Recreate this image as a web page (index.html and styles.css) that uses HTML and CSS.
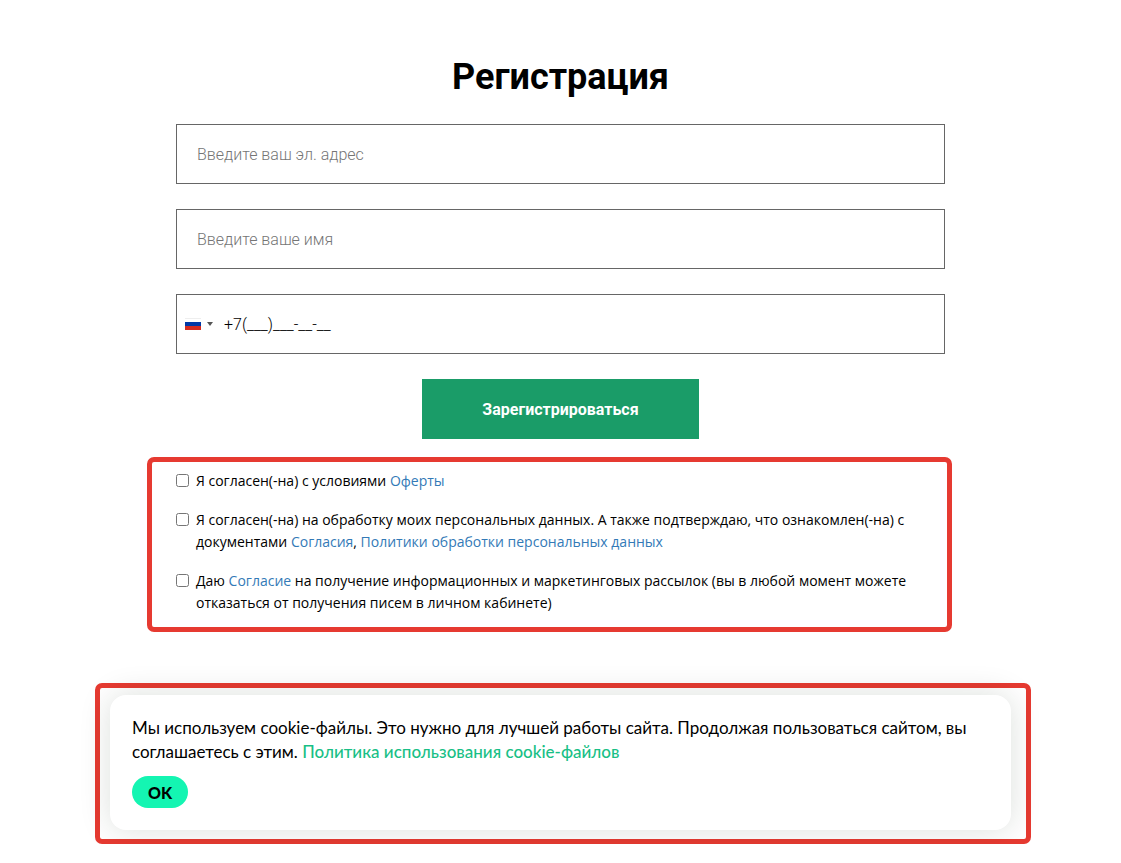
FILE: index.html
```html
<!DOCTYPE html>
<html lang="ru">

<head>
    <meta charset="UTF-8">
    <meta name="viewport" content="width=device-width, initial-scale=1.0">
    <title>Регистрация</title>
    <link rel="stylesheet" href="styles.css">
</head>

<body>
    <main class="container">
        <h1 class="title">Регистрация</h1>
        <form class="form">
            <input type="email" class="field" name="email" placeholder="Введите ваш эл. адрес" aria-label="Введите ваш эл. адрес">
            <input type="text" class="field" name="name" placeholder="Введите ваше имя" aria-label="Введите ваше имя">
            <div class="field phone">
                <button type="button" class="country" aria-label="Россия">
                    <svg class="flag" width="16" height="12" viewBox="0 0 16 12">
                        <rect width="16" height="12" fill="#fff" />
                        <rect y="4" width="16" height="4" fill="#0039a6" />
                        <rect y="8" width="16" height="4" fill="#d52b1e" />
                        <path d="M0 .5h16" stroke="#eee" />
                    </svg>
                    <svg width="6" height="4" viewBox="0 0 6 4">
                        <path d="M0 0h6L3 4z" fill="#555" />
                    </svg>
                </button>
                <input type="tel" class="phone_input" name="phone" value="+7(___)___-__-__" aria-label="Телефон">
            </div>
            <button type="submit" class="submit">Зарегистрироваться</button>

            <div class="frame agreements">
                <div class="agreement">
                    <input type="checkbox" id="offer">
                    <label for="offer">Я согласен(-на) с условиями <a href="#">Оферты</a></label>
                </div>
                <div class="agreement">
                    <input type="checkbox" id="personal">
                    <label for="personal">Я согласен(-на) на обработку моих персональных данных. А также подтверждаю, что ознакомлен(-на) с документами <a href="#">Согласия</a>, <a href="#">Политики обработки персональных данных</a></label>
                </div>
                <div class="agreement">
                    <input type="checkbox" id="mailing">
                    <label for="mailing">Даю <a href="#">Согласие</a> на получение информационных и маркетинговых рассылок (вы в любой момент можете отказаться от получения писем в личном кабинете)</label>
                </div>
            </div>
        </form>
    </main>

    <div class="cookie_wrap">
        <div class="frame cookie_frame">
            <div class="cookie">
                <p class="cookie_text">Мы используем cookie-файлы. Это нужно для лучшей работы сайта. Продолжая пользоваться сайтом, вы соглашаетесь с этим. <a href="#">Политика использования cookie-файлов</a></p>
                <button type="button" class="cookie_ok">OK</button>
            </div>
        </div>
    </div>
</body>

</html>
```
FILE: styles.css
```css
* {
    box-sizing: border-box;
}

body {
    margin: 0;
    background-color: #fff;
    color: #000;
    font-family: Roboto, sans-serif;
}

a {
    text-decoration: none;
}

.container {
    max-width: 769px;
    margin: 0 auto;
    padding-top: 52px;
}

.title {
    margin: 0 0 22px;
    font-size: 36px;
    font-weight: 700;
    line-height: 50px;
    text-align: center;
}

.form {
    display: flex;
    flex-direction: column;
}

.field {
    width: 100%;
    height: 60px;
    margin: 0 0 25px;
    padding: 0 20px;
    border: 1px solid #666;
    border-radius: 0;
    background-color: #fff;
    color: #000;
    font-family: Roboto, sans-serif;
    font-size: 16px;
    font-weight: 300;
}

.field::placeholder {
    color: #757575;
}

.phone {
    display: flex;
    align-items: center;
    padding: 0 8px;
}

.country {
    display: flex;
    align-items: center;
    gap: 6px;
    margin: 0;
    padding: 0;
    border: 0;
    background: none;
}

.phone_input {
    flex: 1;
    min-width: 0;
    padding: 0 0 0 11px;
    border: 0;
    color: #000;
    font: inherit;
}

.submit {
    align-self: center;
    height: 60px;
    padding: 0 60px;
    border: 0;
    background-color: #1a9c68;
    color: #fff;
    font-family: Roboto, sans-serif;
    font-size: 16px;
    font-weight: 700;
}

.frame {
    border: 5px solid #e63a31;
    border-radius: 7px;
}

.agreements {
    display: flex;
    flex-direction: column;
    gap: 17px;
    margin: 18px -7px 0 -29px;
    padding: 8px 30px 13px 24px;
    font-family: "Open Sans", sans-serif;
    font-size: 14px;
    line-height: 22px;
}

.agreement {
    display: flex;
    align-items: flex-start;
    gap: 7px;
}

.agreement input {
    flex: none;
    width: 13px;
    height: 13px;
    margin: 4px 0 0;
}

.agreement a {
    color: #337ab7;
}

.cookie_wrap {
    max-width: 901px;
    margin: 51px auto 0;
}

.cookie_frame {
    margin: 0 -20px 0 -15px;
    padding: 7px 15px 9px 10px;
}

.cookie {
    padding: 21px 22px 22px;
    border-radius: 16px;
    background-color: #fff;
    box-shadow: 0 0 32px rgba(0, 32, 16, 0.14);
    font-family: Lato, sans-serif;
    font-size: 17px;
    line-height: 24px;
}

.cookie_text {
    margin: 0 0 12px;
}

.cookie_text a {
    color: #19bf86;
    font-weight: 500;
}

.cookie_ok {
    display: block;
    height: 32px;
    padding: 0 16px;
    border: 0;
    border-radius: 16px;
    background-color: #14f5b2;
    color: #000;
    font-family: Lato, sans-serif;
    font-size: 16px;
    font-weight: 900;
}
```
